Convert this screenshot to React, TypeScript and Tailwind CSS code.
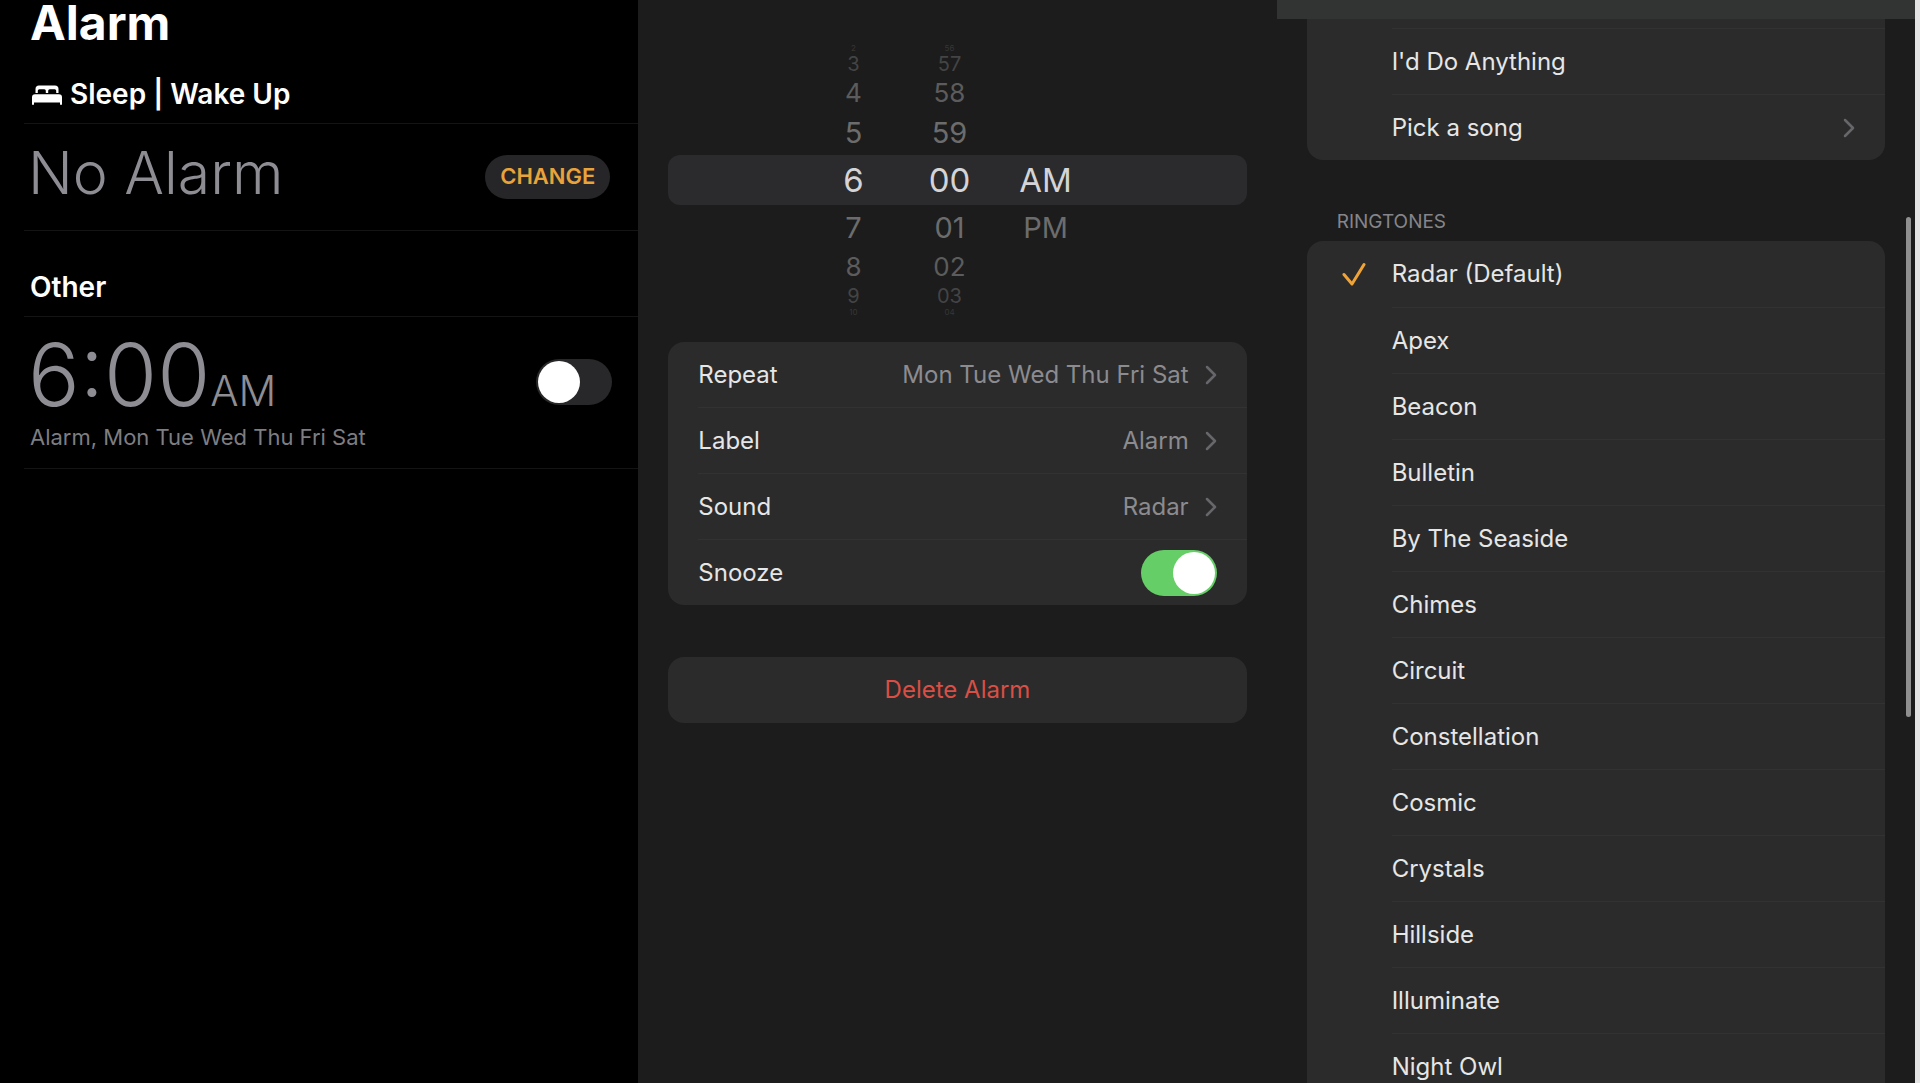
import { useState } from "react";
import type { ReactNode } from "react";

const HOURS = ["2", "3", "4", "5", "6", "7", "8", "9", "10"];
const MINUTES = ["56", "57", "58", "59", "00", "01", "02", "03", "04"];
const PERIODS = ["", "", "", "", "AM", "PM", "", "", ""];

// row styles from the top of the wheel to the bottom
const WHEEL_ROWS = [
  "h-2 text-[8px] leading-2 text-[#363636]",
  "h-6 text-[20px] leading-6 text-[#444444]",
  "h-[34px] text-[26px] leading-[34px] text-[#5c5c5c]",
  "h-[45px] text-[29px] leading-[45px] text-[#6c6c6c]",
  "h-[50px] text-[33px] leading-[50px] text-[#d4d4d6]",
  "h-[45px] text-[29px] leading-[45px] text-[#6c6c6c]",
  "h-[34px] text-[26px] leading-[34px] text-[#5c5c5c]",
  "h-6 text-[20px] leading-6 text-[#444444]",
  "h-2 text-[8px] leading-2 text-[#363636]",
];

const RINGTONES = [
  "Radar (Default)",
  "Apex",
  "Beacon",
  "Bulletin",
  "By The Seaside",
  "Chimes",
  "Circuit",
  "Constellation",
  "Cosmic",
  "Crystals",
  "Hillside",
  "Illuminate",
  "Night Owl",
];

export default function App() {
  return (
    <div className="grid h-screen grid-cols-3 overflow-hidden border-r-[5px] border-[#e4e4e4] bg-[#1c1c1c] font-['Inter',sans-serif] text-2xl text-[#e6e6e6]">
      <AlarmList />
      <EditAlarm />
      <SoundPicker />
    </div>
  );
}

function AlarmList() {
  const [enabled, setEnabled] = useState(false);

  return (
    <section className="bg-black pl-6">
      <h1 className="pl-1.5 text-[48px] leading-[46px] font-bold text-white">Alarm</h1>

      <h2 className="mt-[18px] flex h-[60px] items-center gap-2 border-b border-[#141414] pt-0.5 pl-2 text-[28px] font-semibold text-white">
        <BedIcon />
        Sleep | Wake Up
      </h2>
      <div className="flex h-[107px] items-center justify-between border-b border-[#141414] pr-7 pl-1">
        <p className="pb-2 text-[59px] leading-[70px] font-light text-[#8e8d93]">No Alarm</p>
        <button className="h-11 rounded-full bg-[#262628] px-[15px] text-[22px] font-semibold text-[#e9a33b]">
          CHANGE
        </button>
      </div>

      <h2 className="mt-[26px] flex h-[60px] items-center border-b border-[#141414] pt-0.5 pl-1.5 text-[28px] font-semibold text-white">
        Other
      </h2>
      <div className="flex items-start justify-between border-b border-[#141414] pt-3.5 pr-[26px] pb-[13px] text-[#8e8d93]">
        <div>
          <p className="flex h-[88px] items-baseline pl-1 text-[86px] leading-[88px] font-light">
            6:00<span className="text-[42px] leading-none">AM</span>
          </p>
          <p className="pl-1.5 text-[22px] leading-9 text-[#7d7d82]">Alarm, Mon Tue Wed Thu Fri Sat</p>
        </div>
        <div className="mt-7">
          <Toggle label="Alarm 6:00 AM" checked={enabled} onChange={setEnabled} />
        </div>
      </div>
    </section>
  );
}

function EditAlarm() {
  const [snooze, setSnooze] = useState(true);

  return (
    <section className="px-[30px] pt-11">
      {/* Time wheel */}
      <div className="relative">
        <div className="absolute inset-x-0 top-[111px] h-[50px] rounded-xl bg-[#2b2b2e]" />
        <div className="relative flex justify-center pr-4">
          <Wheel values={HOURS} />
          <Wheel values={MINUTES} />
          <Wheel values={PERIODS} />
        </div>
      </div>

      <div className="mt-[26px] rounded-2xl bg-[#2b2b2b]">
        <SettingRow label="Repeat" value="Mon Tue Wed Thu Fri Sat" />
        <SettingRow label="Label" value="Alarm" />
        <SettingRow label="Sound" value="Radar" />
        <div className="flex h-[65px] items-center justify-between px-[30px]">
          <span>Snooze</span>
          <Toggle label="Snooze" checked={snooze} onChange={setSnooze} />
        </div>
      </div>

      <button className="mt-[52px] h-[66px] w-full rounded-2xl bg-[#2b2b2b] text-[#d94f45]">
        Delete Alarm
      </button>
    </section>
  );
}

function SoundPicker() {
  const [selected, setSelected] = useState("Radar (Default)");

  return (
    <section className="relative px-[30px]">
      {/* Translucent bar and scroll thumb over the list */}
      <div className="absolute inset-x-0 top-0 z-10 h-[19px] bg-[#323434]" />
      <div className="absolute top-[217px] right-1 h-[500px] w-[5px] rounded-full bg-[#8f8f8f]" />

      <div className="rounded-b-2xl bg-[#2b2b2b] pt-7">
        <SoundRow first={false}>I'd Do Anything</SoundRow>
        <SoundRow first={false} chevron>
          Pick a song
        </SoundRow>
      </div>

      <h2 className="mt-11 mb-0.5 pl-[30px] text-[19px] leading-[35px] text-[#85858a]">RINGTONES</h2>
      <div className="rounded-t-2xl bg-[#2b2b2b]">
        {RINGTONES.map((name, i) => (
          <SoundRow
            key={name}
            first={i === 0}
            checked={name === selected}
            onClick={() => setSelected(name)}
          >
            {name}
          </SoundRow>
        ))}
      </div>
    </section>
  );
}

function Wheel({ values }: { values: string[] }) {
  return (
    <ul className="w-24 text-center">
      {values.map((value, i) => (
        <li key={i} className={WHEEL_ROWS[i]}>
          {value}
        </li>
      ))}
    </ul>
  );
}

function SettingRow({ label, value }: { label: string; value: string }) {
  return (
    <div className="pl-[30px]">
      <button className="flex h-[66px] w-full items-center justify-between border-b border-[#323232] pr-[30px]">
        <span>{label}</span>
        <span className="flex items-center gap-4 text-[#8b8b90]">
          {value}
          <ChevronIcon />
        </span>
      </button>
    </div>
  );
}

function SoundRow({
  children,
  first,
  checked = false,
  chevron = false,
  onClick,
}: {
  children: ReactNode;
  first: boolean;
  checked?: boolean;
  chevron?: boolean;
  onClick?: () => void;
}) {
  return (
    <button onClick={onClick} className="flex h-[66px] w-full items-center">
      <span className="w-[85px] shrink-0 pl-[35px]">{checked && <CheckIcon />}</span>
      <span
        className={
          first
            ? "flex h-full flex-1 items-center justify-between pr-[30px]"
            : "flex h-full flex-1 items-center justify-between border-t border-[#323232] pr-[30px]"
        }
      >
        {children}
        {chevron && <ChevronIcon />}
      </span>
    </button>
  );
}

function Toggle({
  label,
  checked,
  onChange,
}: {
  label: string;
  checked: boolean;
  onChange: (value: boolean) => void;
}) {
  return (
    <label className="block cursor-pointer">
      <input
        type="checkbox"
        aria-label={label}
        checked={checked}
        onChange={(e) => onChange(e.target.checked)}
        className="peer sr-only"
      />
      <span className="flex h-[46px] w-[76px] rounded-full bg-[#28282a] p-0.5 peer-checked:justify-end peer-checked:bg-[#65ce66]">
        <span className="size-[42px] rounded-full bg-white" />
      </span>
    </label>
  );
}

function BedIcon() {
  return (
    <svg viewBox="0 0 30 20" className="h-5 w-[30px]" fill="currentColor">
      <path d="M3.500 8V4A3.500 3.500 0 0 1 7 .5h16A3.500 3.500 0 0 1 26.500 4v4h-2.300V5.800a1.500 1.500 0 0 0-1.500-1.500h-5a1.500 1.500 0 0 0-1.500 1.500V8h-2.400V5.800a1.500 1.500 0 0 0-1.500-1.500h-5a1.500 1.500 0 0 0-1.500 1.500V8z" />
      <path d="M3 9.200h24a3 3 0 0 1 3 3V19a1 1 0 0 1-2 0V17.500H2V19a1 1 0 0 1-2 0v-6.800a3 3 0 0 1 3-3z" />
    </svg>
  );
}

function ChevronIcon() {
  return (
    <svg viewBox="0 0 12 20" className="h-5 w-3" fill="none" stroke="#67676b" strokeWidth="2.500" strokeLinecap="round" strokeLinejoin="round">
      <path d="M2 2l8 8-8 8" />
    </svg>
  );
}

function CheckIcon() {
  return (
    <svg viewBox="0 0 24 24" className="size-6" fill="none" stroke="#f0a437" strokeWidth="3" strokeLinecap="round" strokeLinejoin="round">
      <path d="M2 12.500L10 22L22 2.500" />
    </svg>
  );
}
